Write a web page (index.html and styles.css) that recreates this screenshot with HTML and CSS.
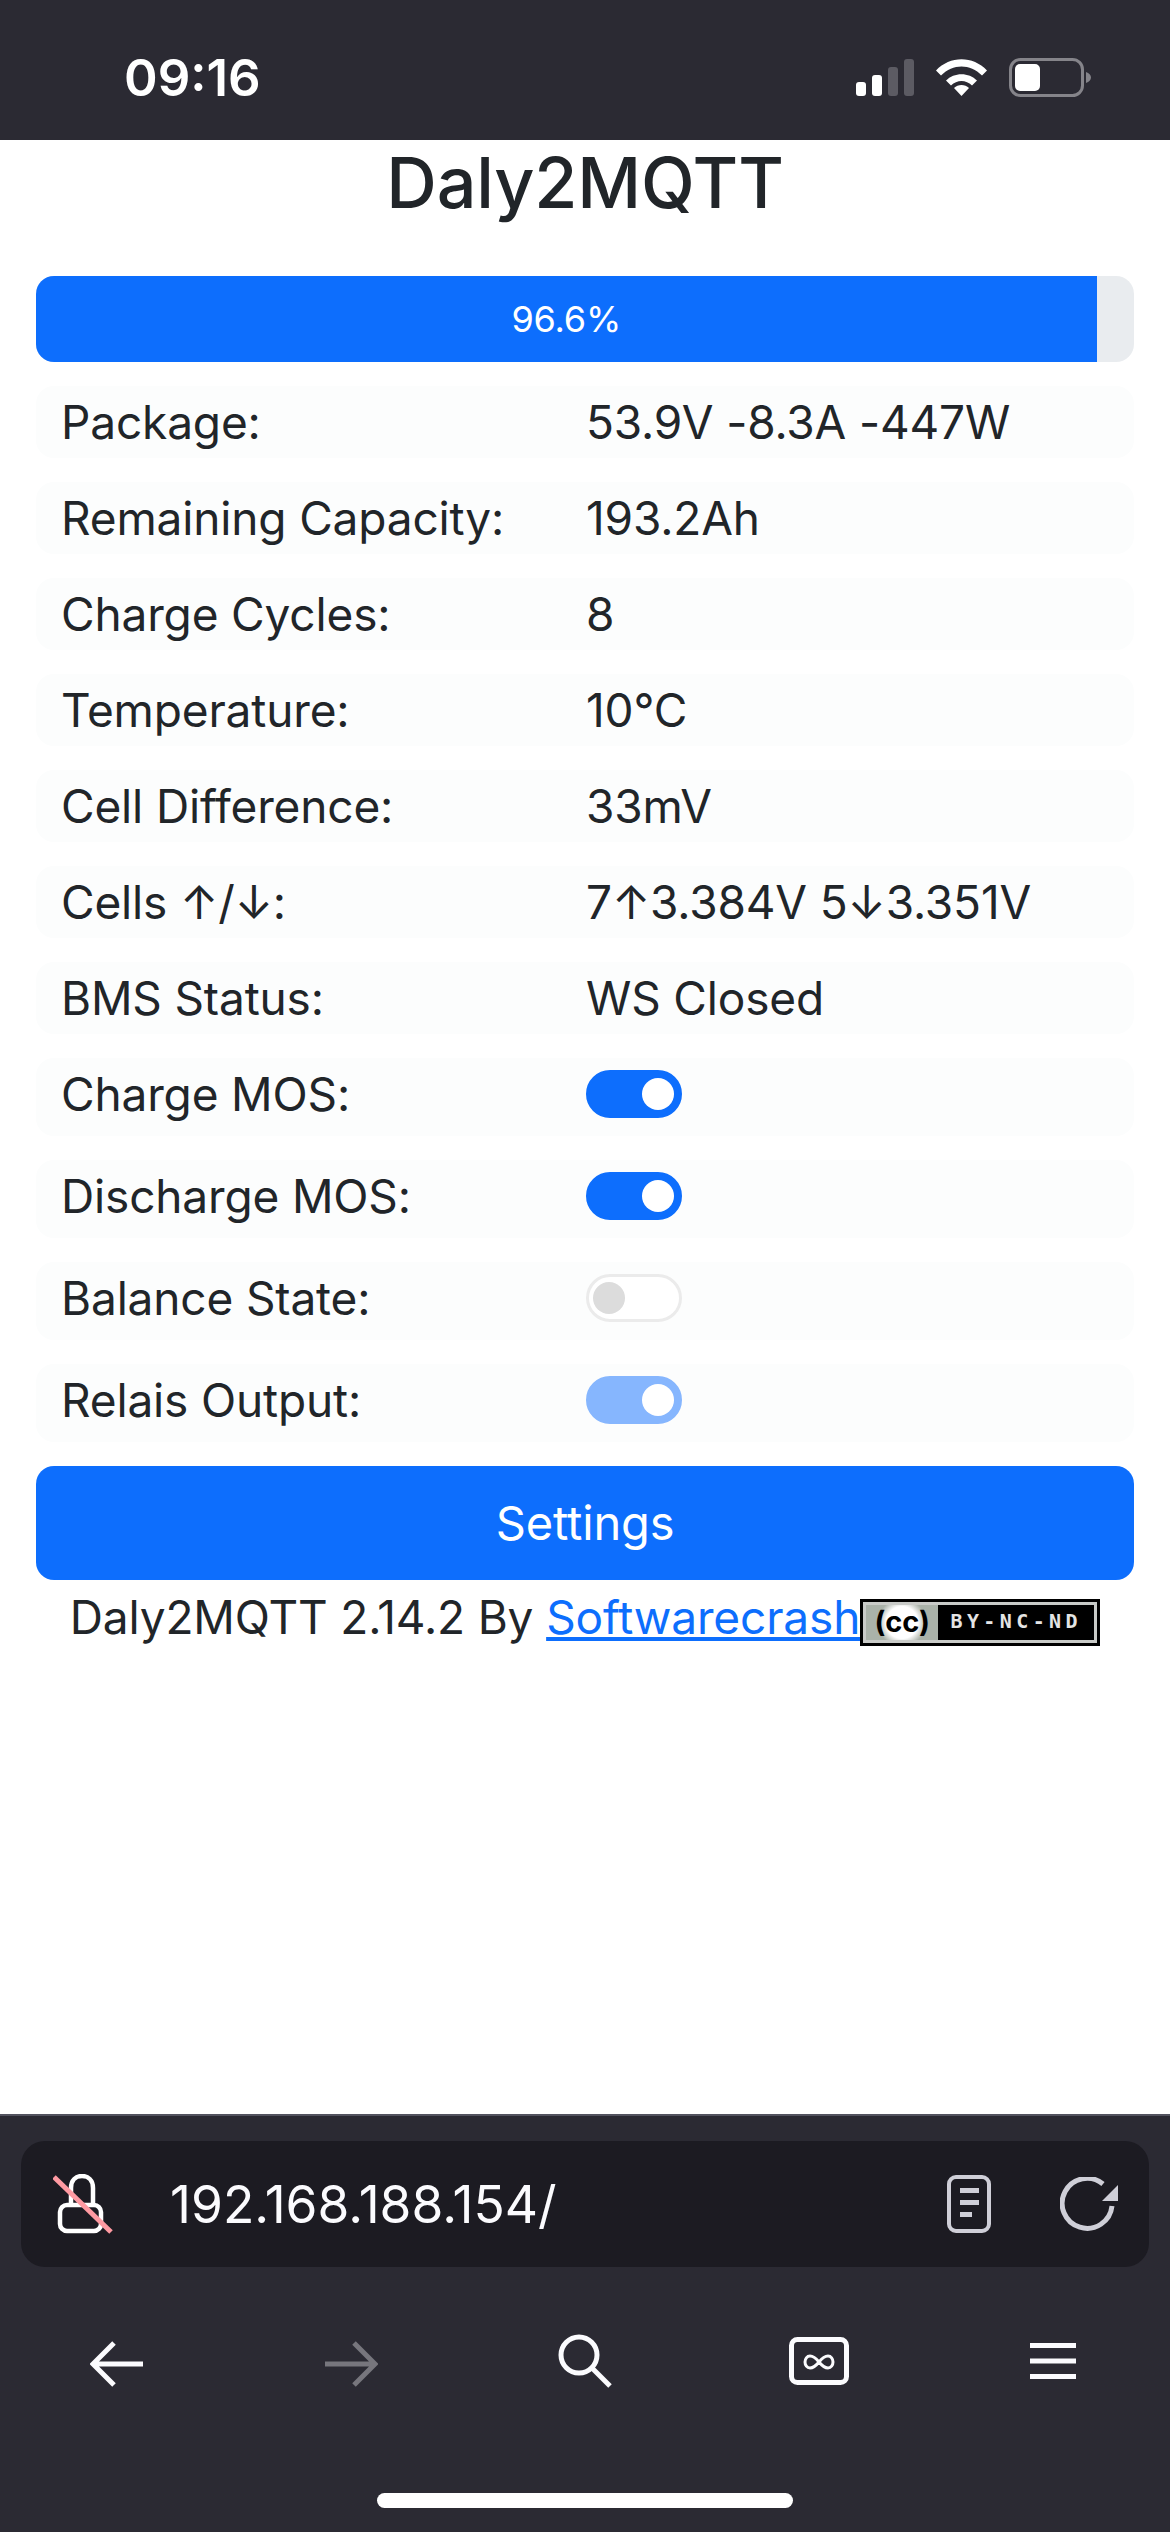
FILE: index.html
```html
<!DOCTYPE html>
<html>
	<head>
		<meta charset="UTF-8">
		<title>Daly2MQTT</title>
		<link rel="stylesheet" href="styles.css">
	</head>
	<body>
		<div class="phone">
			<div class="statusbar">
				<span class="clock">09:16</span>
				<div class="status-icons">
					<svg class="signal" width="58" height="37" viewBox="0 0 58 37">
						<rect x="0" y="23" width="10" height="14" rx="3" fill="#fff"/>
						<rect x="16" y="16" width="10" height="21" rx="3" fill="#fff"/>
						<rect x="32" y="8" width="10" height="29" rx="3" fill="#5c5b63"/>
						<rect x="48" y="0" width="10" height="37" rx="3" fill="#5c5b63"/>
					</svg>
					<svg class="wifi" width="51" height="37" viewBox="0 0 51 37">
						<path d="M0 11.5 C14 -3.5 37 -3.5 51 11.5 L46 16.5 C34 4.5 17 4.5 5 16.5 Z" fill="#fff"/>
						<path d="M10 21.5 C18 13 33 13 41 21.5 L36 26.5 C30 20.5 21 20.5 15 26.5 Z" fill="#fff"/>
						<path d="M18 29 C22 25 29 25 33 29 L25.500 37 Z" fill="#fff"/>
					</svg>
					<svg class="battery" width="82" height="39" viewBox="0 0 82 39">
						<rect x="1.500" y="1.500" width="72" height="36" rx="10" fill="none" stroke="#85848a" stroke-width="3"/>
						<rect x="6" y="6" width="25" height="27" rx="5" fill="#fff"/>
						<path d="M77 14 C80 15 82 17 82 19.500 C82 22 80 24 77 25 Z" fill="#85848a"/>
					</svg>
				</div>
			</div>
			<div class="page">
				<h1 class="title">Daly2MQTT</h1>
				<div class="progress">
					<div class="progress-bar" style="width: 96.6%">96.6%</div>
				</div>
				<div class="row"><span>Package:</span><span>53.9V -8.3A -447W</span></div>
				<div class="row"><span>Remaining Capacity:</span><span>193.2Ah</span></div>
				<div class="row"><span>Charge Cycles:</span><span>8</span></div>
				<div class="row"><span>Temperature:</span><span>10°C</span></div>
				<div class="row"><span>Cell Difference:</span><span>33mV</span></div>
				<div class="row"><span>Cells ↑/↓:</span><span>7↑3.384V 5↓3.351V</span></div>
				<div class="row"><span>BMS Status:</span><span>WS Closed</span></div>
				<div class="row row-switch"><span>Charge MOS:</span><span class="switch on"></span></div>
				<div class="row row-switch"><span>Discharge MOS:</span><span class="switch on"></span></div>
				<div class="row row-switch"><span>Balance State:</span><span class="switch"></span></div>
				<div class="row row-switch"><span>Relais Output:</span><span class="switch on faded"></span></div>
				<a class="btn" href="#">Settings</a>
				<div class="footer">
					Daly2MQTT 2.14.2 By <a href="#">Softwarecrash</a><span class="badge"><span class="badge-inner"><span class="badge-cc">(cc)</span><span class="badge-terms">BY-NC-ND</span></span></span>
				</div>
			</div>
			<div class="browserbar">
				<div class="urlbar">
					<svg class="lock" width="60" height="60" viewBox="0 0 60 60">
						<path d="M18 31 V14 C18 6 23 2 29 2 C35 2 40 6 40 14 V31" fill="none" stroke="#fff" stroke-width="4.500"/>
						<rect x="7" y="31" width="41" height="26" rx="7" fill="#1c1b22" stroke="#fff" stroke-width="4.500"/>
						<path d="M1 3 L58 58" stroke="#ff9aa2" stroke-width="5"/>
					</svg>
					<span class="url">192.168.188.154/</span>
					<svg class="reader" width="44" height="58" viewBox="0 0 44 58">
						<rect x="2" y="2" width="40" height="54" rx="7" fill="none" stroke="#cfcfd8" stroke-width="4"/>
						<rect x="13" y="13" width="19" height="5" fill="#cfcfd8"/>
						<rect x="13" y="25" width="19" height="5" fill="#cfcfd8"/>
						<rect x="13" y="37" width="12" height="5" fill="#cfcfd8"/>
					</svg>
					<svg class="reload" width="58" height="54" viewBox="0 0 58 54">
						<path d="M52 29 A25 25 0 1 1 43 7" fill="none" stroke="#cfcfd8" stroke-width="5"/>
						<path d="M58 8 V24 H42 Z" fill="#cfcfd8"/>
					</svg>
				</div>
				<div class="toolbar">
					<div class="tool">
						<svg class="arrow" width="54" height="46" viewBox="0 0 54 46"><path d="M24 2 L3 23 L24 44 M3 23 H53" fill="none" stroke="#fbfbfe" stroke-width="5"/></svg>
					</div>
					<div class="tool">
						<svg class="arrow" width="54" height="46" viewBox="0 0 54 46"><path d="M30 2 L51 23 L30 44 M51 23 H1" fill="none" stroke="#77767d" stroke-width="5"/></svg>
					</div>
					<div class="tool">
						<svg width="54" height="54" viewBox="0 0 54 54"><circle cx="21" cy="21" r="18" fill="none" stroke="#fbfbfe" stroke-width="5"/><path d="M34 34 L52 52" stroke="#fbfbfe" stroke-width="5"/></svg>
					</div>
					<div class="tool">
						<svg width="60" height="48" viewBox="0 0 60 48">
							<rect x="2.500" y="2.500" width="55" height="43" rx="6" fill="none" stroke="#fbfbfe" stroke-width="5"/>
							<path d="M30 25 C26 20 23 19 21 19 C18 19 16 22 16 25 C16 28 18 31 21 31 C23 31 26 30 30 25 C34 20 37 19 39 19 C42 19 44 22 44 25 C44 28 42 31 39 31 C37 31 34 30 30 25 Z" fill="none" stroke="#fbfbfe" stroke-width="3"/>
						</svg>
					</div>
					<div class="tool">
						<svg width="46" height="36" viewBox="0 0 46 36"><path d="M0 2.500 H46 M0 18 H46 M0 33.500 H46" stroke="#fbfbfe" stroke-width="5"/></svg>
					</div>
				</div>
				<div class="homebar"></div>
			</div>
		</div>
	</body>
</html>
```

FILE: styles.css
```css
* {
	margin: 0;
	padding: 0;
	box-sizing: border-box;
}
body {
	background-color: #fff;
	color: #212529;
	font-family: "Inter", "Liberation Sans", sans-serif;
	font-size: 46px;
	letter-spacing: -0.15px;
}
.phone {
	display: flex;
	flex-direction: column;
	height: 2532px;
	overflow: hidden;
}
.statusbar {
	display: flex;
	align-items: center;
	justify-content: space-between;
	flex: none;
	height: 140px;
	padding: 15px 79px 0 124px;
	background-color: #2b2a33;
	color: #fff;
}
.clock {
	font-size: 51px;
	font-weight: 600;
	letter-spacing: 0;
}
.status-icons {
	display: flex;
	align-items: center;
}
.signal {
	margin-right: 22px;
}
.wifi {
	margin-right: 22px;
}
.page {
	flex: 1;
	padding: 0 36px;
}
.title {
	font-size: 70px;
	font-weight: 500;
	line-height: 86px;
	text-align: center;
	margin-bottom: 50px;
}
.progress {
	height: 86px;
	margin-bottom: 24px;
	background-color: #e9ecef;
	border-radius: 18px;
	overflow: hidden;
}
.progress-bar {
	height: 100%;
	background-color: #0d6efd;
	color: #fff;
	font-size: 36px;
	line-height: 86px;
	text-align: center;
}
.row {
	display: grid;
	grid-template-columns: 550px 1fr;
	align-items: center;
	height: 72px;
	margin-bottom: 24px;
	padding-left: 25px;
	background-color: #fcfdfd;
	border-radius: 18px;
}
.row > span:first-child {
	margin-right: -25px;
}
.row-switch {
	height: 78px;
	padding-bottom: 6px;
}
.row > span:last-child {
	margin-left: -25px;
}
.switch {
	position: relative;
	display: block;
	width: 96px;
	height: 48px;
	background-color: #fff;
	border: 3px solid #ebebeb;
	border-radius: 24px;
}
.switch::after {
	content: "";
	position: absolute;
	top: 5px;
	left: 4px;
	width: 32px;
	height: 32px;
	background-color: #dcdcdc;
	border-radius: 50%;
}
.switch.on {
	background-color: #0d6efd;
	border-color: #0d6efd;
}
.switch.on::after {
	left: auto;
	right: 5px;
	background-color: #fff;
}
.switch.faded {
	background-color: #86b6fe;
	border-color: #86b6fe;
}
.btn {
	display: block;
	height: 114px;
	background-color: #0d6efd;
	color: #fff;
	font-size: 47px;
	line-height: 114px;
	text-align: center;
	text-decoration: none;
	border-radius: 18px;
}
.footer {
	padding-top: 9px;
	line-height: 56px;
	text-align: center;
}
.footer a {
	color: #0d6efd;
}
.badge {
	display: inline-block;
	width: 240px;
	height: 47px;
	vertical-align: -12px;
	background-color: #000;
	padding: 3px;
	letter-spacing: 0;
	overflow: hidden;
}
.badge-inner {
	display: flex;
	height: 100%;
	border: 3px solid #c9cbc8;
	background-color: #000;
}
.badge-cc {
	width: 72px;
	background: radial-gradient(circle at 50% 50%, #fff 0, #fff 16px, #aab2a9 24px);
	color: #000;
	font-size: 29px;
	font-weight: 700;
	line-height: 33px;
	text-align: center;
}
.badge-terms {
	flex: 1;
	color: #e4e4e4;
	font-family: "DejaVu Sans Mono", monospace;
	font-size: 20px;
	font-weight: 700;
	line-height: 33px;
	letter-spacing: 4.4px;
	text-align: center;
}
.browserbar {
	flex: none;
	height: 418px;
	padding-top: 25px;
	background-color: #2b2a33;
	border-top: 2px solid #52525e;
	color: #fbfbfe;
}
.urlbar {
	display: flex;
	align-items: center;
	height: 126px;
	margin: 0 21px;
	padding: 0 31px 0 32px;
	background-color: #1c1b22;
	border-radius: 24px;
}
.lock {
	flex: none;
}
.url {
	flex: 1;
	margin-left: 57px;
	font-size: 51.5px;
	letter-spacing: 0;
}
.reader {
	flex: none;
	margin-right: 69px;
}
.toolbar {
	display: flex;
	align-items: center;
	height: 100px;
	margin-top: 44px;
}
.tool {
	display: flex;
	align-items: center;
	justify-content: center;
	flex: 1;
}
.arrow {
	margin-top: 5px;
}
.homebar {
	width: 416px;
	height: 15px;
	margin: 82px auto 0;
	background-color: #fff;
	border-radius: 8px;
}
```
